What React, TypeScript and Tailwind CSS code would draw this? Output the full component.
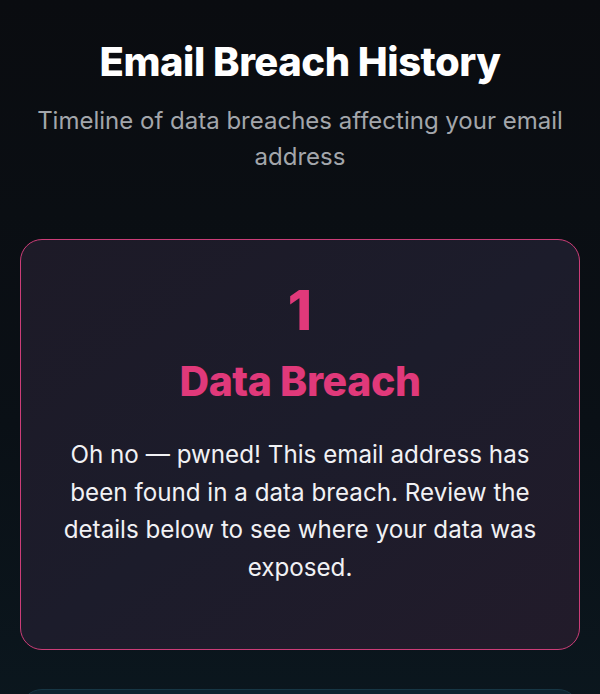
export default function App() {
  return (
    <div className="min-h-[694px] bg-gradient-to-b from-[#0a0c10] via-[#0a1016] to-[#0b1a22] px-5 pt-[38px] pb-10 font-['Inter',sans-serif]">
      <h1 className="text-center text-[40px] font-extrabold leading-[48px] tracking-[-0.012em] text-white">
        Email Breach History
      </h1>
      <p className="mx-auto mt-[17px] max-w-[560px] text-center text-[24px] leading-[36px] text-[#a3a6ab]">
        Timeline of data breaches affecting your email address
      </p>

      <div className="mt-[64px] rounded-[22px] border-[1.5px] border-[#cc3d78] bg-gradient-to-br from-[#1d1a27] via-[#1c1c2b] to-[#221b2a] px-9 pt-[40px] pb-[63px] text-center">
        <div className="text-[55px] font-extrabold leading-[60px] text-[#e0397a]">1</div>
        <h2 className="mt-[17px] text-[41px] font-extrabold leading-[48px] tracking-[-0.01em] text-[#e0397a]">
          Data Breach
        </h2>
        <p className="mt-[31px] text-[24.2px] leading-[37.5px] text-[#f1f1f4]">
          Oh no — pwned! This email address has been found in a data breach. Review the details below to see where your data was exposed.
        </p>
      </div>

      <div className="mt-[39px] h-[120px] rounded-[22px] border border-[#173644] bg-[#0e2430]" />
    </div>
  );
}
